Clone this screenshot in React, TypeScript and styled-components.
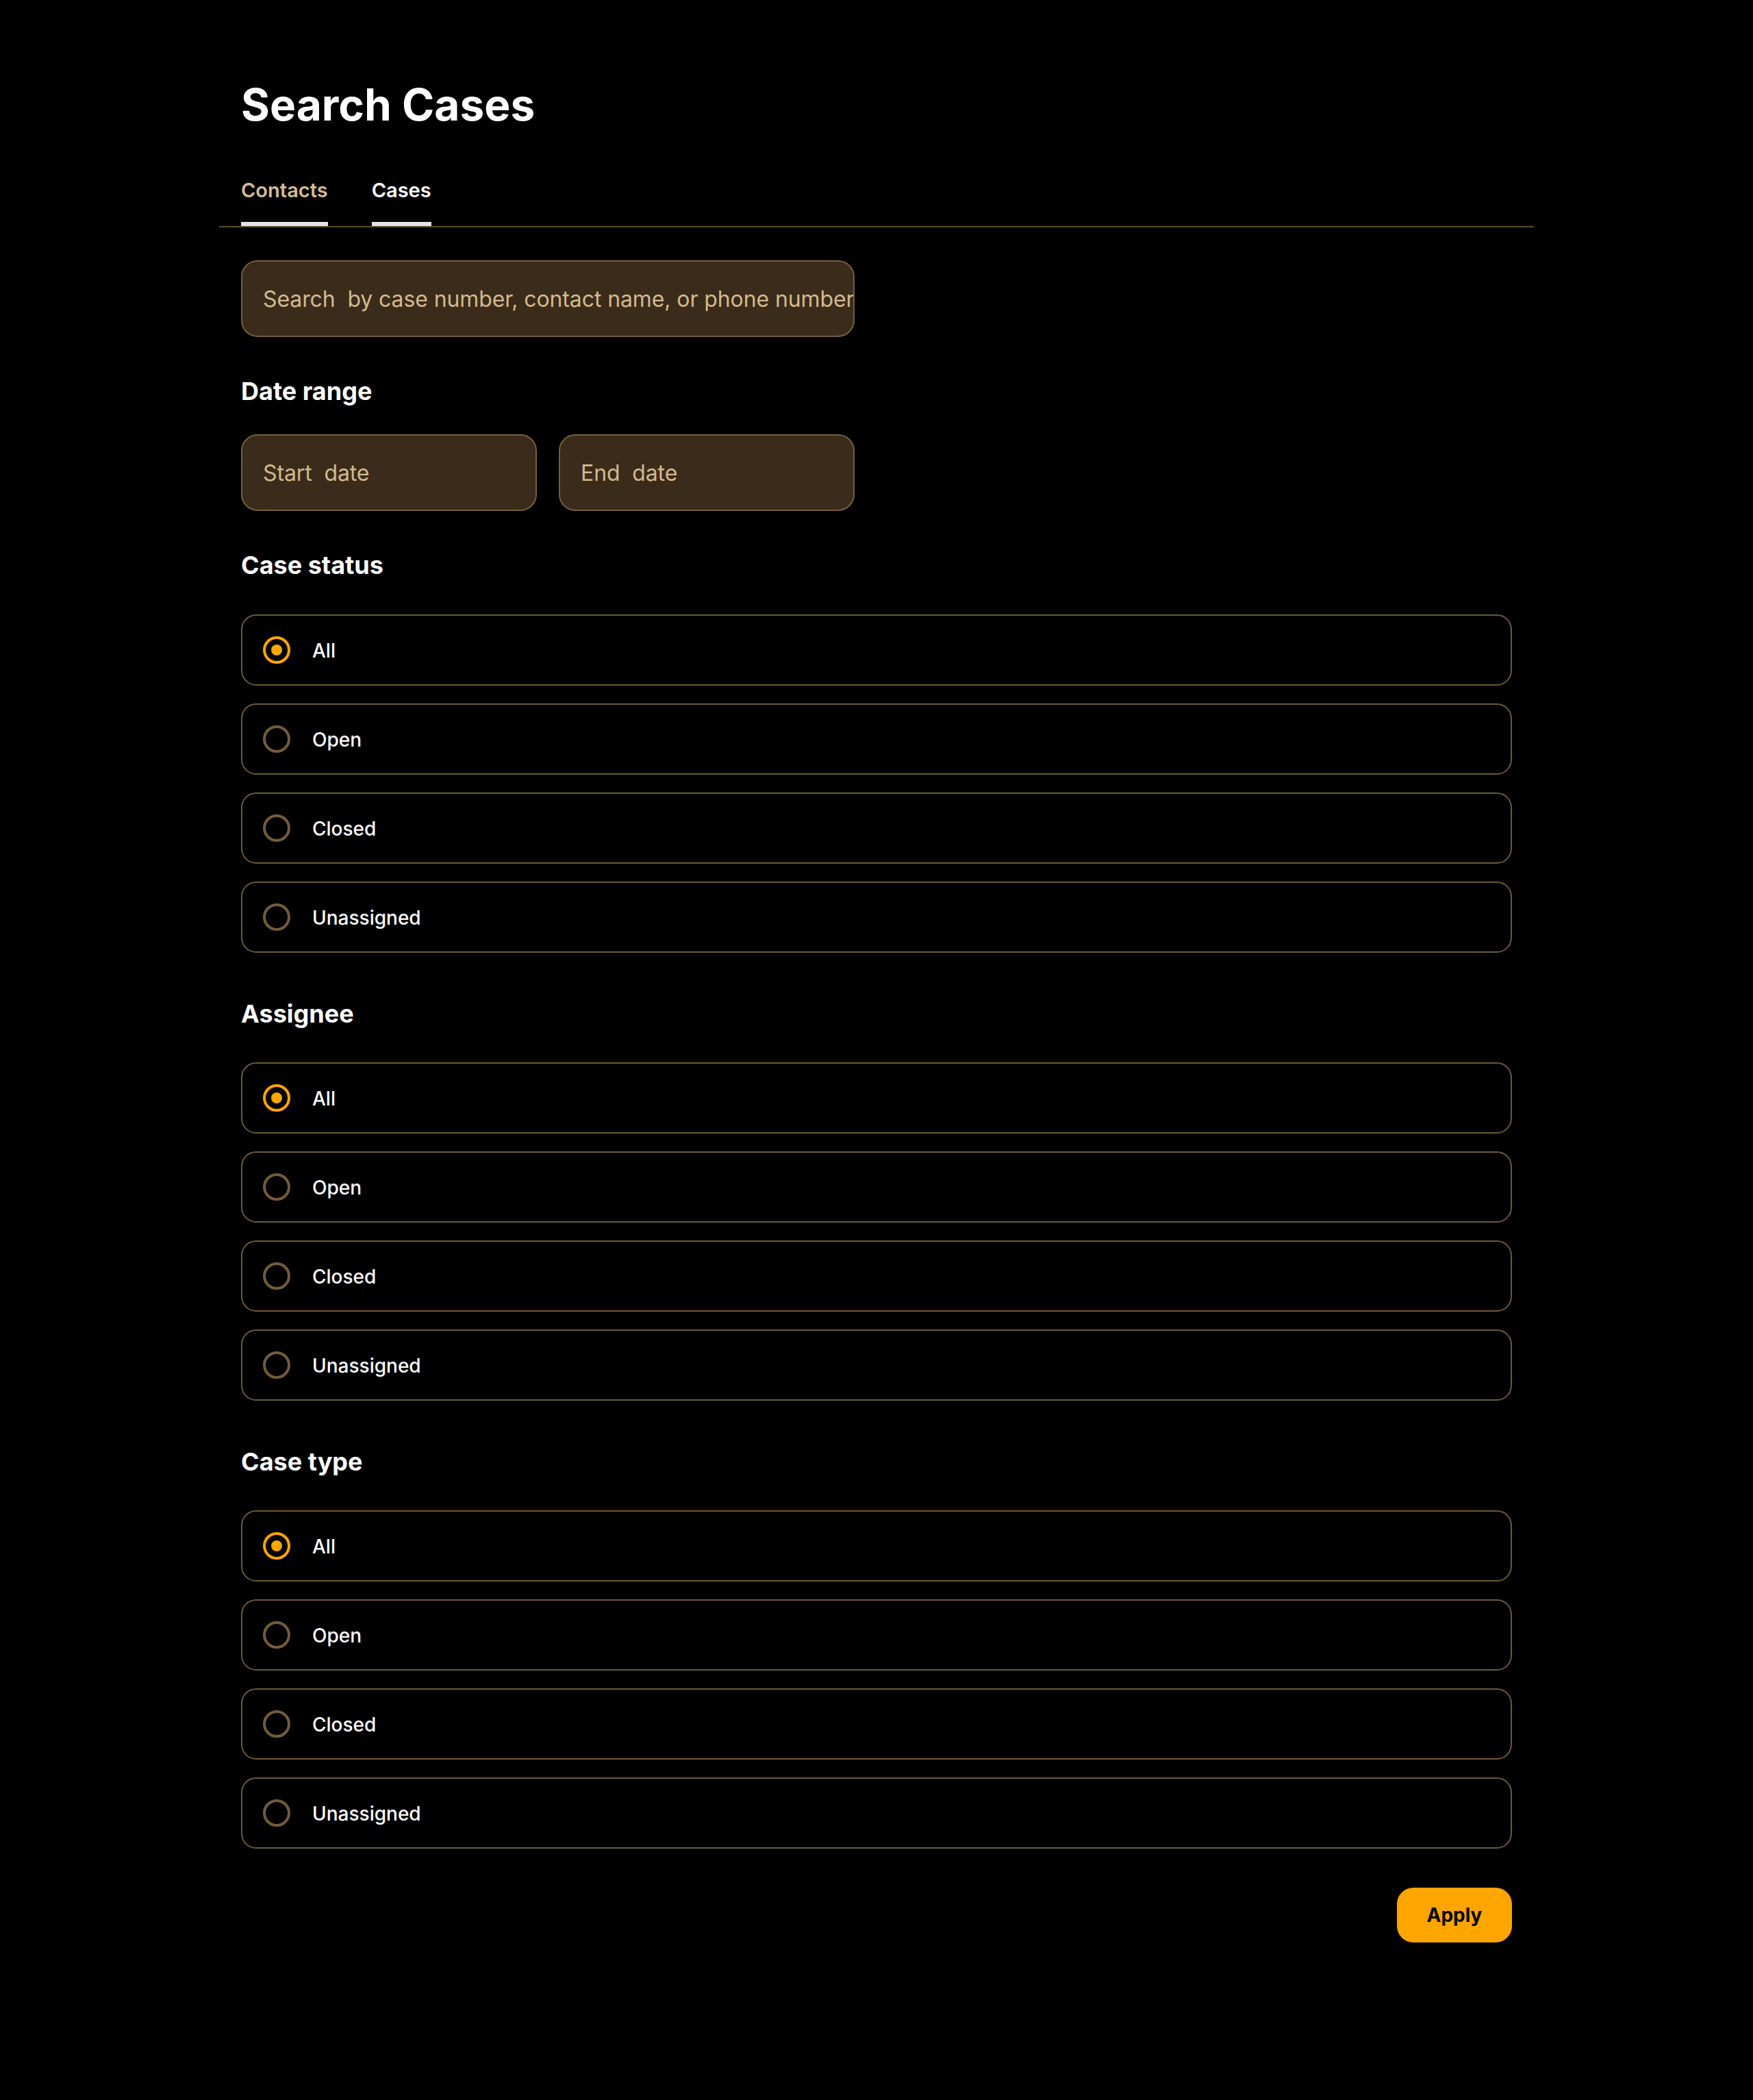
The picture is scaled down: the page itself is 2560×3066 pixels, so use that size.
import React, { useState } from "react";
import styled, { createGlobalStyle } from "styled-components";

const GlobalStyle = createGlobalStyle`
  html, body {
    margin: 0;
    padding: 0;
    background: #000000;
  }
  body {
    font-family: Inter, "Noto Sans", "Liberation Sans", sans-serif;
    color: #ffffff;
  }
  * { box-sizing: border-box; }
`;

const Page = styled.main`
  width: 1920px;
  margin: 0 auto;
  padding: 114px 0 230px;
`;

const Title = styled.h1`
  margin: 0 0 69px;
  padding: 0 32px;
  font-size: 64px;
  line-height: 78px;
  font-weight: 700;
  color: #ffffff;
`;

const TabList = styled.div`
  display: flex;
  gap: 64px;
  padding: 0 32px;
  border-bottom: 2px solid #5e4c2e;
`;

const Tab = styled.button<{ $tone: "tan" | "white" }>`
  appearance: none;
  background: none;
  border: none;
  border-bottom: 6px solid #e4e4e7;
  padding: 0 0 29px;
  margin: 0;
  font-family: inherit;
  font-size: 29px;
  line-height: 34px;
  font-weight: 600;
  color: ${(p) => (p.$tone === "tan" ? "#d6bd91" : "#ffffff")};
  cursor: pointer;
`;

const Form = styled.form`
  display: flex;
  flex-direction: column;
  gap: 57px;
  padding: 48px 32px 0;
`;

const Field = styled.input<{ $width?: number }>`
  width: ${(p) => (p.$width ? `${p.$width}px` : "100%")};
  height: 112px;
  background: #3a2b1b;
  border: 2px solid #74603a;
  border-radius: 24px;
  padding: 0 0 0 30px;
  font-family: inherit;
  font-size: 32px;
  letter-spacing: -0.1px;
  color: #d8bf93;
  outline: none;
  &::placeholder {
    color: #d3b98c;
    opacity: 1;
    white-space: pre;
  }
`;

const Section = styled.section<{ $gap: number; $trail?: number }>`
  display: flex;
  flex-direction: column;
  gap: ${(p) => p.$gap}px;
  margin-bottom: ${(p) => p.$trail ?? 0}px;
`;

const SectionTitle = styled.h2`
  margin: 0;
  font-size: 36px;
  line-height: 44px;
  font-weight: 700;
  color: #ffffff;
`;

const DateRow = styled.div`
  display: grid;
  grid-template-columns: 432px 432px;
  gap: 32px;
`;

const RadioGroup = styled.div`
  display: flex;
  flex-direction: column;
  gap: 26px;
`;

const RadioRow = styled.label`
  display: flex;
  align-items: center;
  gap: 32px;
  height: 104px;
  padding: 0 30px;
  border: 2px solid #6f5934;
  border-radius: 22px;
  cursor: pointer;
`;

const HiddenInput = styled.input`
  position: absolute;
  opacity: 0;
  width: 0;
  height: 0;
  margin: 0;
`;

const RadioDot = styled.span<{ $checked: boolean }>`
  position: relative;
  flex: none;
  width: 40px;
  height: 40px;
  border-radius: 50%;
  border: 4px solid ${(p) => (p.$checked ? "#ffa500" : "#745c37")};
  &::after {
    content: "";
    display: ${(p) => (p.$checked ? "block" : "none")};
    position: absolute;
    left: 50%;
    top: 50%;
    width: 16px;
    height: 16px;
    margin: -8px 0 0 -8px;
    border-radius: 50%;
    background: #ffa500;
  }
`;

const RadioLabel = styled.span`
  font-size: 28px;
  line-height: 34px;
  font-weight: 500;
  color: #ffffff;
  padding-top: 2px;
`;

const Footer = styled.div`
  display: flex;
  justify-content: flex-end;
`;

const ApplyButton = styled.button`
  width: 168px;
  height: 80px;
  border: none;
  border-radius: 24px;
  background: #ffa500;
  color: #000000;
  font-family: inherit;
  font-size: 28px;
  font-weight: 700;
  cursor: pointer;
`;

const OPTIONS = ["All", "Open", "Closed", "Unassigned"];

function RadioSet({ name }: { name: string }) {
  const [value, setValue] = useState("All");
  return (
    <RadioGroup role="radiogroup">
      {OPTIONS.map((opt) => (
        <RadioRow key={opt}>
          <HiddenInput
            type="radio"
            name={name}
            checked={value === opt}
            onChange={() => setValue(opt)}
          />
          <RadioDot $checked={value === opt} />
          <RadioLabel>{opt}</RadioLabel>
        </RadioRow>
      ))}
    </RadioGroup>
  );
}

export default function App() {
  return (
    <>
      <GlobalStyle />
      <Page>
        <Title>Search Cases</Title>
        <TabList role="tablist">
          <Tab $tone="tan" type="button">Contacts</Tab>
          <Tab $tone="white" type="button">Cases</Tab>
        </TabList>
        <Form onSubmit={(e) => e.preventDefault()}>
          <Field
            $width={896}
            placeholder="Search  by case number, contact name, or phone number"
          />
          <Section $gap={41}>
            <SectionTitle>Date range</SectionTitle>
            <DateRow>
              <Field placeholder="Start  date" />
              <Field placeholder="End  date" />
            </DateRow>
          </Section>
          <Section $gap={50} $trail={10}>
            <SectionTitle>Case status</SectionTitle>
            <RadioSet name="status" />
          </Section>
          <Section $gap={49} $trail={10}>
            <SectionTitle>Assignee</SectionTitle>
            <RadioSet name="assignee" />
          </Section>
          <Section $gap={49}>
            <SectionTitle>Case type</SectionTitle>
            <RadioSet name="type" />
          </Section>
          <Footer>
            <ApplyButton type="submit">Apply</ApplyButton>
          </Footer>
        </Form>
      </Page>
    </>
  );
}
